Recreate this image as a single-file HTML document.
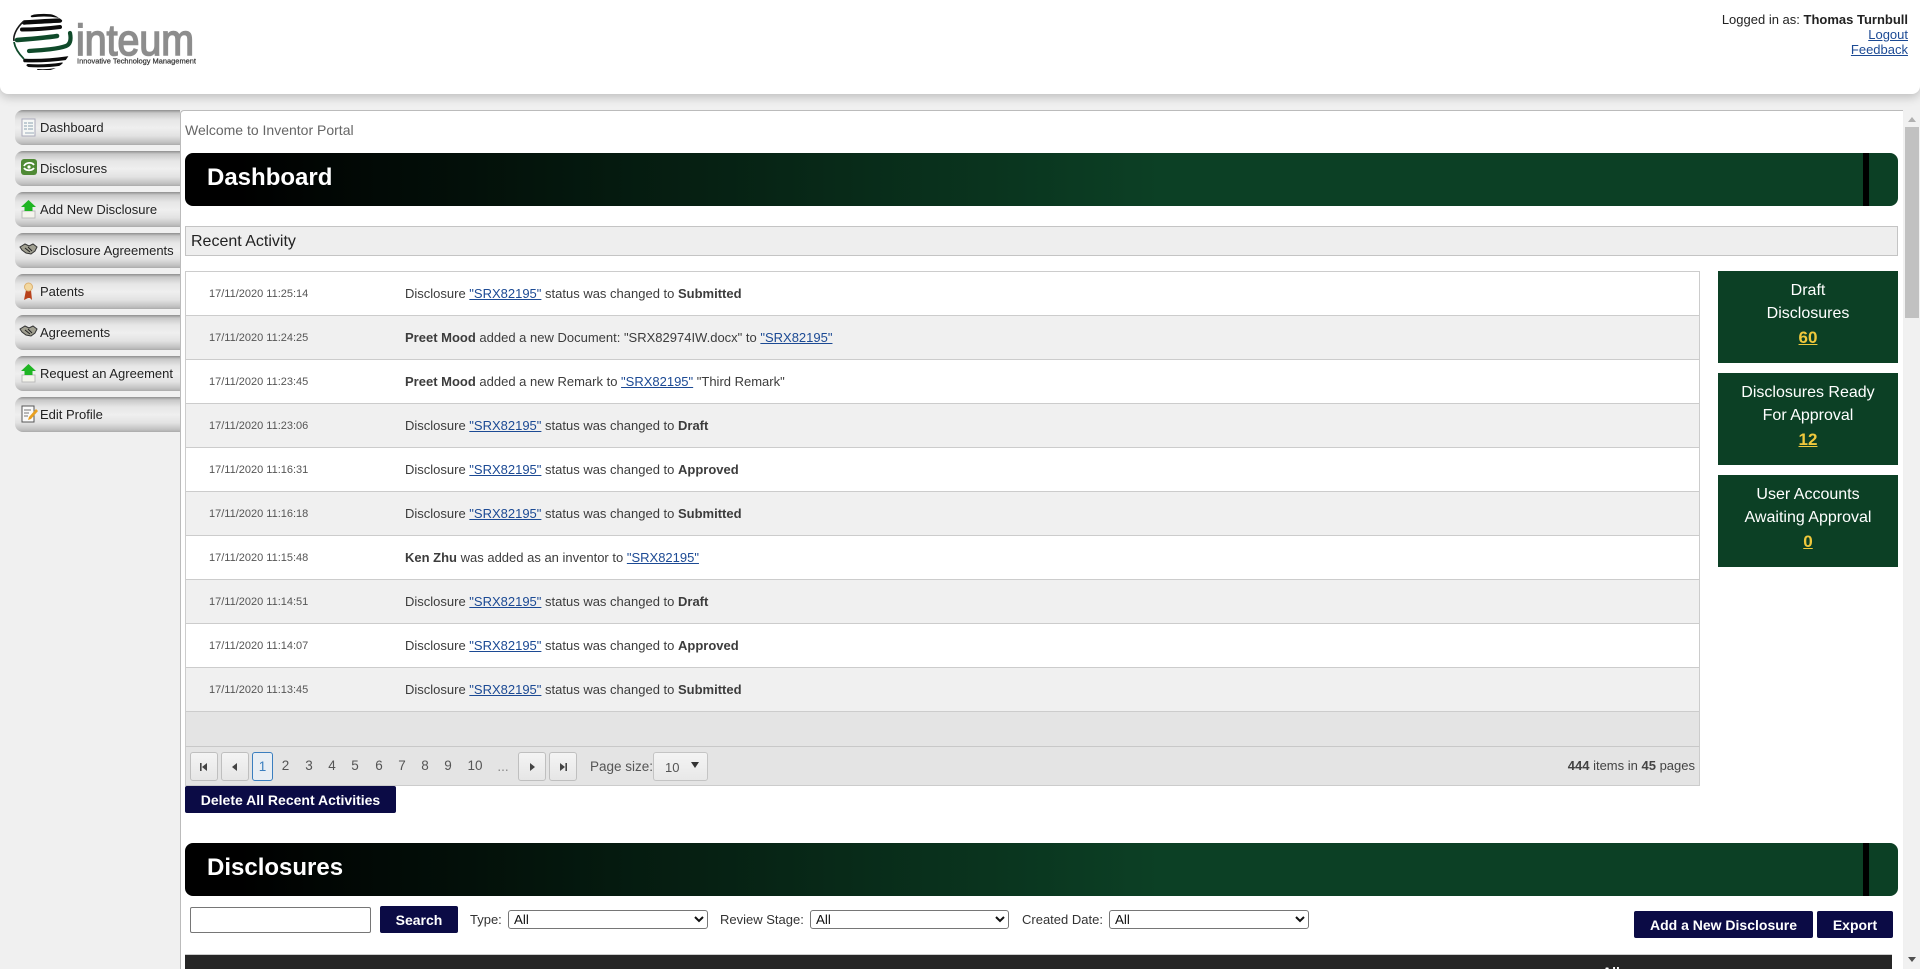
<!DOCTYPE html>
<html lang="en"><head><meta charset="utf-8"><title>Inventor Portal</title>
<style>
html,body{margin:0;padding:0}
body{width:1920px;height:969px;overflow:hidden;position:relative;background:#f0f0f0;font-family:"Liberation Sans",Arial,sans-serif;color:#333}
.a{position:absolute;white-space:nowrap}
a{color:#1c4a94;text-decoration:underline}
#hdr{left:0;top:0;width:1920px;height:94px;background:#fff;border-radius:0 0 8px 8px;box-shadow:0 3px 10px rgba(0,0,0,.22)}
.nav{position:absolute;left:15px;width:165px;height:35px;border-radius:8px 0 0 8px;background:linear-gradient(#8f8f8f 0,#c8c8c8 3px,#e6e6e6 10px,#efefef 18px,#e2e2e2 26px,#bebebe 33px,#aaa 35px);font-size:13px;line-height:35px;color:#222;white-space:nowrap}
.nav span{position:absolute;left:25px;top:0}
.nav svg{position:absolute;left:4px;top:6px}
#main{left:180px;top:110px;width:1723px;height:859px;background:#fff;border-left:1px solid #bbb;border-top:1px solid #bbb;box-sizing:border-box;border-top-left-radius:4px}
.ban{position:absolute;left:185px;width:1713px;height:53px;border-radius:8px;background:linear-gradient(90deg,#000 0,#000 3%,#0c4025 57%,#0c4025 100%);color:#fff;font-weight:bold;font-size:24px;line-height:50px}
.ban b{position:absolute;left:22px;top:0}
.ban i{position:absolute;left:1678px;top:0;width:6px;height:53px;background:#000}
.row{position:absolute;left:185px;width:1515px;height:44px;box-sizing:border-box;border-bottom:1px solid #ccc;border-left:1px solid #ccc;border-right:1px solid #ccc;line-height:43px;font-size:13px;color:#3c3c3c;white-space:nowrap}
.row.alt{background:#f0f0f0}
.row em{position:absolute;left:23px;top:1px;font-style:normal;font-size:11px;color:#555}
.row span{position:absolute;left:219px;top:0}
.tile{position:absolute;left:1718px;width:180px;height:92px;background:#0c4025;color:#fff;text-align:center;font-size:16px;line-height:23px;padding-top:8px;box-sizing:border-box}
.tile a{color:#f0c93c;font-weight:bold;font-size:17px;display:block;line-height:25px}
.btn{position:absolute;background:#0b0b45;color:#fff;font-weight:bold;font-size:14px;text-align:center;border-radius:2px;line-height:29px;height:27px;white-space:nowrap}
.pb{position:absolute;top:752px;height:29px;width:27px;box-sizing:border-box;border:1px solid #bfbfbf;border-radius:3px;background:linear-gradient(#f4f4f4,#e6e6e6)}
.pb svg{position:absolute;left:8px;top:9px}
.pn{position:absolute;top:753px;line-height:26px;font-size:13.5px;color:#555;transform:translateX(-50%)}
select{position:absolute;font-family:"Liberation Sans",Arial,sans-serif;font-size:13.33px;height:19px;padding:0 0 0 1px;box-sizing:border-box;background:#fff;border:1px solid #767676;border-radius:3px;color:#111}
.lb{position:absolute;top:911px;font-size:13px;line-height:17px;color:#333;white-space:nowrap}
</style></head><body>

<div class="a" id="hdr"></div>

<svg class="a" style="left:10px;top:8px" width="190" height="62" viewBox="10 8 190 62">
<defs><clipPath id="g"><circle cx="43" cy="42" r="29"/></clipPath></defs>
<g clip-path="url(#g)">
<g stroke="#0b0b0b" fill="none" stroke-linecap="round">
<path d="M32 16C40 15 50 15 58 16.5" stroke-width="2.6"/>
<path d="M24 22.5C34 22 48 21 60 20.5" stroke-width="4.4"/>
<path d="M22 29.5C34 29.5 48 28.5 60 27" stroke-width="4"/>
<path d="M25 60.5C40 61 54 60 68 58" stroke-width="3.6"/>
<path d="M28 65.5C40 66.5 52 65.5 62 64" stroke-width="3"/>
<path d="M38 70C44 70.5 50 70 56 69" stroke-width="2"/>
</g>
</g>
<path d="M24 21C16 28 13 36 14 41" stroke="#1a1a1a" stroke-width="1.6" fill="none"/>
<path d="M14 42C15 48 19 54 24 59" stroke="#0f4a2a" stroke-width="1.8" fill="none"/>
<path d="M17 40C30 39 44 38 57 36" stroke="#0f4a2a" stroke-width="4.6" stroke-linecap="round" fill="none"/>
<path d="M29 51C44 50 58 49 66 46C71 44 71 38 70 33" stroke="#0f4a2a" stroke-width="4.2" stroke-linecap="round" fill="none"/>
<text x="76" y="55" font-family="Liberation Sans,sans-serif" font-size="44" fill="#8d8d8d" stroke="#8d8d8d" stroke-width="1.6" textLength="118" lengthAdjust="spacingAndGlyphs">inteum</text>
<text x="77" y="63.5" font-family="Liberation Sans,sans-serif" font-size="7.6" fill="#333" stroke="#333" stroke-width=".2" textLength="119" lengthAdjust="spacingAndGlyphs">Innovative Technology Management</text>
</svg>

<div class="a" style="right:12px;top:12px;text-align:right;font-size:13px;line-height:15px;color:#222">Logged in as: <b>Thomas Turnbull</b><br><a href="#">Logout</a><br><a href="#">Feedback</a></div>

<!-- Sidebar -->
<div class="nav" style="top:110px"><svg width="22" height="24" viewBox="0 0 22 24"><rect x="3" y="3" width="13" height="17" fill="#f6f8f6" stroke="#aab"/><path d="M5 7h3M5 10h3M5 13h3M9 7h5M9 10h5M9 13h5" stroke="#8aa0b0"/><path d="M6 17h9" stroke="#9ab"/></svg><span>Dashboard</span></div>
<div class="nav" style="top:151px"><svg width="22" height="24" viewBox="0 0 22 24"><rect x="2" y="2" width="16" height="16" rx="3" fill="#4f8a35"/><path d="M5 9C7 5 13 5 15 8M15 11C13 14 7 14 5 11" stroke="#fff" stroke-width="1.8" fill="none"/><circle cx="10" cy="10" r="1.6" fill="#fff"/></svg><span>Disclosures</span></div>
<div class="nav" style="top:192px"><svg width="22" height="24" viewBox="0 0 22 24"><path d="M3 13h13v7H3z" fill="#f4f4ec" stroke="#bbb"/><path d="M9.5 2L17 9H13.500V13H5.500V9H2z" fill="#1fb523"/></svg><span>Add New Disclosure</span></div>
<div class="nav" style="top:233px"><svg width="22" height="24" viewBox="0 0 22 24"><path d="M1 8L6 5 10 7 14 5 18 8 16 12 12 15 7 14 3 11z" fill="#a09f90" stroke="#333"/><path d="M6 9l5 4M9 8l4 4" stroke="#222"/></svg><span>Disclosure Agreements</span></div>
<div class="nav" style="top:274px"><svg width="22" height="24" viewBox="0 0 22 24"><path d="M7 10L5 20 9 18 11 18 13 20 12 10z" fill="#b8421c"/><circle cx="9.500" cy="7" r="4" fill="#f3d8a0" stroke="#dcb070"/></svg><span>Patents</span></div>
<div class="nav" style="top:315px"><svg width="22" height="24" viewBox="0 0 22 24"><path d="M1 8L6 5 10 7 14 5 18 8 16 12 12 15 7 14 3 11z" fill="#a09f90" stroke="#333"/><path d="M6 9l5 4M9 8l4 4" stroke="#222"/></svg><span>Agreements</span></div>
<div class="nav" style="top:356px"><svg width="22" height="24" viewBox="0 0 22 24"><path d="M3 13h13v7H3z" fill="#f4f4ec" stroke="#bbb"/><path d="M9.500 2L17 9H13.500V13H5.500V9H2z" fill="#1fb523"/></svg><span>Request an Agreement</span></div>
<div class="nav" style="top:397px"><svg width="22" height="24" viewBox="0 0 22 24"><rect x="3" y="3" width="12" height="16" fill="#fafafa" stroke="#555"/><path d="M5 7h7M5 10h5M5 13h4" stroke="#777"/><path d="M17 6L10 14 9 17 12 16 19 8z" fill="#e8a020"/></svg><span>Edit Profile</span></div>

<!-- Main -->
<div class="a" id="main"></div>
<div class="a" style="left:185px;top:122px;font-size:14px;line-height:16px;color:#666">Welcome to Inventor Portal</div>

<div class="ban" style="top:153px"><b>Dashboard</b><i></i></div>

<div class="a" style="left:185px;top:226px;width:1713px;height:30px;box-sizing:border-box;background:#eee;border:1px solid #c4c4c4;font-size:16px;line-height:29px;color:#222;padding-left:5px">Recent Activity</div>

<div class="a" style="left:185px;top:271px;width:1515px;height:1px;background:#ccc"></div>
<div class="row" style="top:272px"><em>17/11/2020 11:25:14</em><span>Disclosure <a href="#">"SRX82195"</a> status was changed to <b>Submitted</b></span></div>
<div class="row alt" style="top:316px"><em>17/11/2020 11:24:25</em><span><b>Preet Mood</b> added a new Document: "SRX82974IW.docx" to <a href="#">"SRX82195"</a></span></div>
<div class="row" style="top:360px"><em>17/11/2020 11:23:45</em><span><b>Preet Mood</b> added a new Remark to <a href="#">"SRX82195"</a> "Third Remark"</span></div>
<div class="row alt" style="top:404px"><em>17/11/2020 11:23:06</em><span>Disclosure <a href="#">"SRX82195"</a> status was changed to <b>Draft</b></span></div>
<div class="row" style="top:448px"><em>17/11/2020 11:16:31</em><span>Disclosure <a href="#">"SRX82195"</a> status was changed to <b>Approved</b></span></div>
<div class="row alt" style="top:492px"><em>17/11/2020 11:16:18</em><span>Disclosure <a href="#">"SRX82195"</a> status was changed to <b>Submitted</b></span></div>
<div class="row" style="top:536px"><em>17/11/2020 11:15:48</em><span><b>Ken Zhu</b> was added as an inventor to <a href="#">"SRX82195"</a></span></div>
<div class="row alt" style="top:580px"><em>17/11/2020 11:14:51</em><span>Disclosure <a href="#">"SRX82195"</a> status was changed to <b>Draft</b></span></div>
<div class="row" style="top:624px"><em>17/11/2020 11:14:07</em><span>Disclosure <a href="#">"SRX82195"</a> status was changed to <b>Approved</b></span></div>
<div class="row alt" style="top:668px"><em>17/11/2020 11:13:45</em><span>Disclosure <a href="#">"SRX82195"</a> status was changed to <b>Submitted</b></span></div>

<div class="a" style="left:185px;top:712px;width:1515px;height:35px;box-sizing:border-box;background:#e4e4e4;border-left:1px solid #ccc;border-right:1px solid #ccc;border-bottom:1px solid #c8c8c8"></div>
<div class="a" style="left:185px;top:747px;width:1515px;height:39px;box-sizing:border-box;background:#e4e4e4;border:1px solid #ccc;border-top:none"></div>

<div class="pb" style="left:190px;width:28px"><svg width="10" height="10" viewBox="0 0 10 10"><path d="M1 1h1.600v8H1zM8 1v8L3 5z" fill="#444"/></svg></div>
<div class="pb" style="left:221px;width:28px"><svg width="10" height="10" viewBox="0 0 10 10"><path d="M7 1v8L2 5z" fill="#444"/></svg></div>
<div class="a" style="left:252px;top:752px;width:21px;height:29px;box-sizing:border-box;border:1px solid #3a7ebf;border-radius:3px;background:#e8eef4;color:#3a7ebf;font-size:13.5px;line-height:27px;text-align:center">1</div>
<div class="pn" style="left:285.500px">2</div>
<div class="pn" style="left:309px">3</div>
<div class="pn" style="left:332px">4</div>
<div class="pn" style="left:355px">5</div>
<div class="pn" style="left:379px">6</div>
<div class="pn" style="left:402px">7</div>
<div class="pn" style="left:425px">8</div>
<div class="pn" style="left:448px">9</div>
<div class="pn" style="left:475px">10</div>
<div class="pn" style="left:503px;color:#888;top:754px">...</div>
<div class="pb" style="left:518px;width:28px"><svg width="10" height="10" viewBox="0 0 10 10"><path d="M3 1v8L8 5z" fill="#444"/></svg></div>
<div class="pb" style="left:549px;width:28px"><svg width="10" height="10" viewBox="0 0 10 10"><path d="M2 1v8L7 5zM7.400 1H9v8H7.400z" fill="#444"/></svg></div>
<div class="a" style="left:590px;top:758px;font-size:13.5px;line-height:18px;color:#555">Page size:</div>
<div class="a" style="left:653px;top:752px;width:55px;height:29px;box-sizing:border-box;border:1px solid #c4c4c4;border-radius:3px;background:linear-gradient(#f4f4f4,#e8e8e8);font-size:13px;line-height:30px;padding-left:11px;color:#555">10<svg style="position:absolute;left:37px;top:9px" width="8" height="6" viewBox="0 0 8 6"><path d="M0 0h8L4 6z" fill="#333"/></svg></div>
<div class="a" style="right:225px;top:757px;font-size:13px;line-height:17px;color:#444"><b>444</b> items in <b>45</b> pages</div>

<div class="btn" style="left:185px;top:786px;width:211px">Delete All Recent Activities</div>

<div class="ban" style="top:843px"><b>Disclosures</b><i></i></div>

<div class="a" style="left:190px;top:907px;width:181px;height:26px;box-sizing:border-box;border:1px solid #767676;border-radius:2px;background:#fff"></div>
<div class="btn" style="left:380px;top:906px;width:78px">Search</div>
<div class="lb" style="left:470px">Type:</div>
<select style="left:508px;top:910px;width:200px"><option>All</option></select>
<div class="lb" style="left:720px">Review Stage:</div>
<select style="left:810px;top:910px;width:199px"><option>All</option></select>
<div class="lb" style="left:1022px">Created Date:</div>
<select style="left:1109px;top:910px;width:200px"><option>All</option></select>
<div class="btn" style="left:1634px;top:911px;width:179px">Add a New Disclosure</div>
<div class="btn" style="left:1817px;top:911px;width:76px">Export</div>

<div class="a" style="left:185px;top:954px;width:1707px;height:15px;background:#262626;border-top:1px solid #ccc;box-sizing:border-box;overflow:hidden"><div class="a" style="left:1417px;top:9px;color:#fff;font-size:14px;line-height:16px;font-weight:bold">All</div></div>

<!-- Tiles -->
<div class="tile" style="top:271px">Draft<br>Disclosures<a href="#">60</a></div>
<div class="tile" style="top:373px">Disclosures Ready<br>For Approval<a href="#">12</a></div>
<div class="tile" style="top:475px">User Accounts<br>Awaiting Approval<a href="#">0</a></div>

<!-- Scrollbar -->
<div class="a" style="left:1904px;top:110px;width:16px;height:859px;background:#f1f1f1"></div>
<svg class="a" style="left:1904px;top:115px" width="16" height="8" viewBox="0 0 16 8"><path d="M4 7L8 2 12 7z" fill="#b0b0b0"/></svg>
<div class="a" style="left:1905px;top:127px;width:14px;height:191px;background:#c1c1c1"></div>
<svg class="a" style="left:1904px;top:956px" width="16" height="8" viewBox="0 0 16 8"><path d="M4 1H12L8 6z" fill="#505050"/></svg>

</body></html>
